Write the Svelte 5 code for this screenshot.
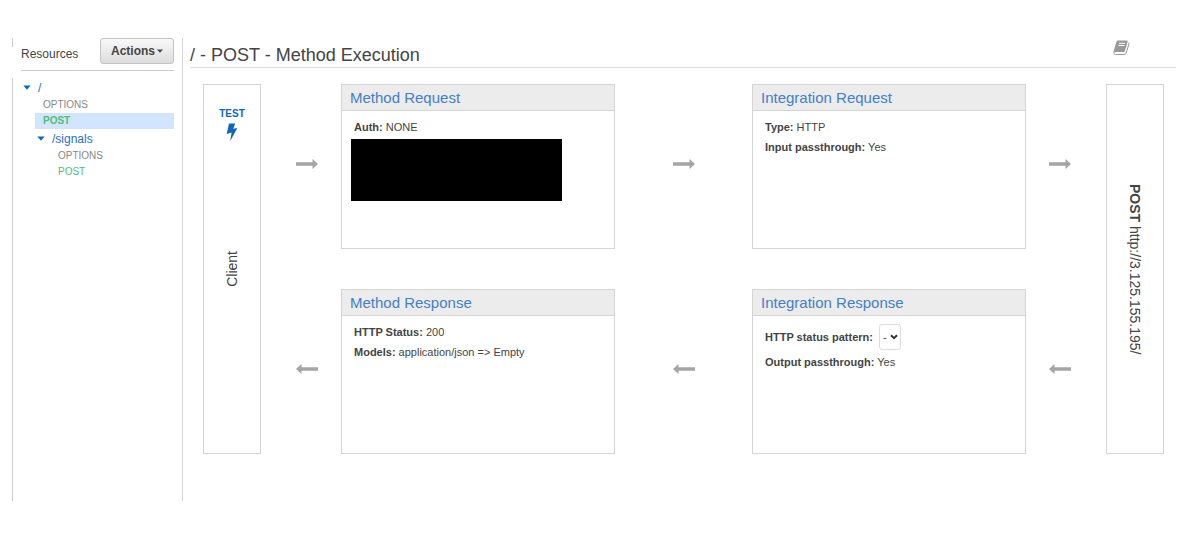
<script lang="ts">
	interface Method {
		name: string;
		kind: 'options' | 'post';
		selected?: boolean;
	}

	interface Resource {
		path: string;
		methods: Method[];
		children?: Resource[];
	}

	const tree: Resource[] = [
		{
			path: '/',
			methods: [
				{ name: 'OPTIONS', kind: 'options' },
				{ name: 'POST', kind: 'post', selected: true }
			],
			children: [
				{
					path: '/signals',
					methods: [
						{ name: 'OPTIONS', kind: 'options' },
						{ name: 'POST', kind: 'post' }
					]
				}
			]
		}
	];

	let pattern = $state('-');
</script>

{#snippet arrow(direction: 'right' | 'left')}
	<svg class="arrow {direction}" width="22" height="10" viewBox="0 0 22 10" aria-hidden="true">
		<path d="M0 3.3h16.5V0L22 5l-5.5 5V6.7H0z" />
	</svg>
{/snippet}

{#snippet branch(resources: Resource[])}
	<ul class="branch">
		{#each resources as resource}
			<li>
				<a class="resource" href="#resource">
					<svg width="8" height="5" viewBox="0 0 8 5" aria-hidden="true">
						<path d="M0.3 0.5h7.4L4 4.7z" />
					</svg>
					{resource.path}
				</a>
				<div class="nested">
					{#each resource.methods as method}
						<a class="method {method.kind}" class:selected={method.selected} href="#method">
							{method.name}
						</a>
					{/each}
					{#if resource.children}
						{@render branch(resource.children)}
					{/if}
				</div>
			</li>
		{/each}
	</ul>
{/snippet}

<div class="page">
	<aside class="sidebar">
		<div class="sidebar-head">
			<span class="sidebar-title">Resources</span>
			<button class="actions" type="button">
				Actions
				<svg width="6" height="4" viewBox="0 0 6 4" aria-hidden="true">
					<path d="M0 0.5h6L3 3.7z" />
				</svg>
			</button>
		</div>
		<nav class="tree">
			{@render branch(tree)}
		</nav>
	</aside>

	<main class="main">
		<header class="main-head">
			<h1>/ - POST - Method Execution</h1>
			<a class="docs" href="#docs" aria-label="Documentation">
				<svg width="17" height="16" viewBox="0 0 17 16" aria-hidden="true">
					<path
						class="cover"
						d="M5 0.5h8.6c0.8 0 1.2 0.6 1 1.3l-2.7 9.2c-0.2 0.7-0.8 1.1-1.5 1.1H2.3c-0.8 0-1.5 0.4-1.5 1-0.4-0.5-0.4-1.2-0.2-1.9L3.5 1.7c0.2-0.7 0.8-1.2 1.5-1.2z"
					/>
					<path class="edge" d="M0.9 12.4c-0.1 1.4 0.6 2.1 1.8 2.1h8.6c0.9 0 1.5-0.5 1.8-1.3l2.8-9.1c0.2-0.7 0-1.2-0.5-1.6" />
					<path class="lines" d="M6 3.3h6M5.4 5.5h6" />
				</svg>
			</a>
		</header>

		<div class="flow">
			<section class="endpoint client">
				<a class="test" href="#test">
					TEST
					<svg width="12" height="19" viewBox="0 0 12 19" aria-hidden="true">
						<path d="M3 0.5h6.2L7.3 5.8l4-0.9L4.2 18.3 5.6 9.6 0.7 10.9z" />
					</svg>
				</a>
				<span class="label up">Client</span>
			</section>

			<div class="lane first">{@render arrow('right')}</div>

			<section class="card">
				<h2><a href="#method-request">Method Request</a></h2>
				<div class="card-body">
					<p><b>Auth:</b> NONE</p>
					<div class="redacted"></div>
				</div>
			</section>

			<div class="lane">{@render arrow('right')}</div>

			<section class="card">
				<h2><a href="#integration-request">Integration Request</a></h2>
				<div class="card-body">
					<p><b>Type:</b> HTTP</p>
					<p><b>Input passthrough:</b> Yes</p>
				</div>
			</section>

			<div class="lane last">{@render arrow('right')}</div>

			<section class="endpoint backend">
				<span class="label"><b>POST</b> http://3.125.155.195/</span>
			</section>

			<div class="lane first">{@render arrow('left')}</div>

			<section class="card">
				<h2><a href="#method-response">Method Response</a></h2>
				<div class="card-body">
					<p><b>HTTP Status:</b> 200</p>
					<p><b>Models:</b> application/json =&gt; Empty</p>
				</div>
			</section>

			<div class="lane">{@render arrow('left')}</div>

			<section class="card">
				<h2><a href="#integration-response">Integration Response</a></h2>
				<div class="card-body">
					<div class="field">
						<label for="pattern">HTTP status pattern:</label>
						<span class="select">
							<select id="pattern" bind:value={pattern}>
								<option value="-">-</option>
							</select>
							<svg width="8" height="6" viewBox="0 0 8 6" aria-hidden="true">
								<path d="M1 1.2l3 3 3-3" />
							</svg>
						</span>
					</div>
					<p><b>Output passthrough:</b> Yes</p>
				</div>
			</section>

			<div class="lane last">{@render arrow('left')}</div>
		</div>
	</main>
</div>

<style>
	:global(body) {
		margin: 0;
		background: #fff;
	}

	.page {
		display: flex;
		padding: 38px 21px 35px 12px;
		color: #444;
		font-family: 'Liberation Sans', Arial, sans-serif;
		font-size: 11px;
		line-height: 16px;
	}

	a {
		color: inherit;
		text-decoration: none;
	}

	/* the left rule is broken beside the header */
	.sidebar {
		box-sizing: border-box;
		flex: 0 0 171px;
		padding: 0 8px 0 9px;
		border-right: 1px solid #d4d4d4;
		background: linear-gradient(#ccc 9px, transparent 9px 40px, #ccc 40px) left / 1px 100% no-repeat;
	}

	.sidebar-head {
		display: flex;
		align-items: center;
		justify-content: space-between;
		height: 32px;
		border-bottom: 1px solid #ccc;
	}

	.sidebar-title {
		font-size: 12px;
	}

	.actions {
		display: flex;
		align-items: center;
		gap: 2px;
		height: 26px;
		margin-bottom: 6px;
		padding: 0 10px;
		border: 1px solid #c4c4c4;
		border-radius: 3px;
		background: linear-gradient(#f8f8f8, #ddd);
		color: #444;
		font: bold 12px 'Liberation Sans', Arial, sans-serif;
		cursor: pointer;
	}

	.actions svg {
		fill: #444;
	}

	.tree {
		padding-top: 7px;
	}

	.branch {
		margin: 0;
		padding: 0;
		list-style: none;
	}

	.resource {
		display: flex;
		align-items: center;
		gap: 7px;
		height: 19px;
		padding-left: 2px;
		color: #2a6fc4;
		font-size: 12px;
	}

	.resource svg {
		fill: #1166bb;
	}

	.nested {
		padding-left: 14px;
	}

	.nested .nested {
		padding-left: 15px;
	}

	.method {
		display: block;
		padding-left: 8px;
		color: #888;
		font-size: 10px;
	}

	.method.post {
		color: #55bb77;
	}

	.method.selected {
		background: #d1e5fe;
		font-weight: bold;
	}

	.main {
		flex: 1;
		min-width: 0;
		padding-left: 7px;
	}

	.main-head {
		display: flex;
		align-items: center;
		justify-content: space-between;
		height: 29px;
		padding-right: 46px;
		border-bottom: 1px solid #ddd;
	}

	h1 {
		margin: 0;
		padding-top: 4px;
		font-size: 18px;
		font-weight: normal;
		line-height: 22px;
	}

	.docs {
		height: 16px;
		margin-bottom: 10px;
	}

	.docs .cover {
		fill: #999;
	}

	.docs .edge,
	.docs .lines {
		fill: none;
		stroke: #999;
	}

	.docs .lines {
		stroke: #fff;
	}

	.flow {
		display: grid;
		grid-template-columns: 58px 80px 1fr 0.5fr 1fr 80px 58px;
		grid-template-rows: repeat(2, minmax(165px, auto));
		row-gap: 40px;
		padding: 16px 12px 47px 13px;
	}

	.endpoint {
		display: grid;
		grid-row: 1 / 3;
		grid-template-rows: 1fr auto 1fr;
		justify-items: center;
		border: 1px solid #d4d4d4;
	}

	.client {
		grid-column: 1;
	}

	.backend {
		grid-column: 7;
	}

	.test {
		display: flex;
		flex-direction: column;
		align-items: center;
		gap: 1px;
		padding-top: 21px;
		color: #1166bb;
		font-size: 10px;
		font-weight: bold;
	}

	.test svg {
		fill: #1166bb;
	}

	.label {
		grid-row: 2;
		font-size: 14px;
		writing-mode: vertical-rl;
	}

	.label.up {
		transform: rotate(180deg);
	}

	.lane {
		display: flex;
		align-items: center;
		justify-content: center;
		padding-bottom: 6px;
	}

	.lane.first {
		grid-column: 2;
		padding-left: 12px;
	}

	.lane.last {
		grid-column: 6;
		padding-right: 12px;
	}

	.arrow {
		fill: #a5a5a5;
	}

	.arrow.left {
		transform: scaleX(-1);
	}

	.card {
		border: 1px solid #d4d4d4;
	}

	h2 {
		margin: 0;
		padding: 2px 8px 1px;
		border-bottom: 1px solid #d4d4d4;
		background: #ececec;
		color: #4480c5;
		font-size: 15px;
		font-weight: normal;
		line-height: 22px;
	}

	.card-body {
		display: flex;
		flex-direction: column;
		gap: 4px;
		padding: 8px 12px;
	}

	p {
		margin: 0;
	}

	.redacted {
		width: 85%;
		height: 62px;
		margin-left: -3px;
		background: #000;
	}

	.field {
		display: flex;
		align-items: center;
		gap: 6px;
	}

	.field label {
		font-weight: bold;
	}

	.select {
		position: relative;
		display: flex;
	}

	select {
		width: 22px;
		height: 26px;
		padding: 0 3px;
		border: 1px solid #ddd;
		border-radius: 3px;
		background: #fff;
		color: #444;
		font: 11px 'Liberation Sans', Arial, sans-serif;
		appearance: none;
	}

	.select svg {
		position: absolute;
		top: 10px;
		right: 3px;
		fill: none;
		stroke: #333;
		stroke-width: 2;
		pointer-events: none;
	}
</style>
